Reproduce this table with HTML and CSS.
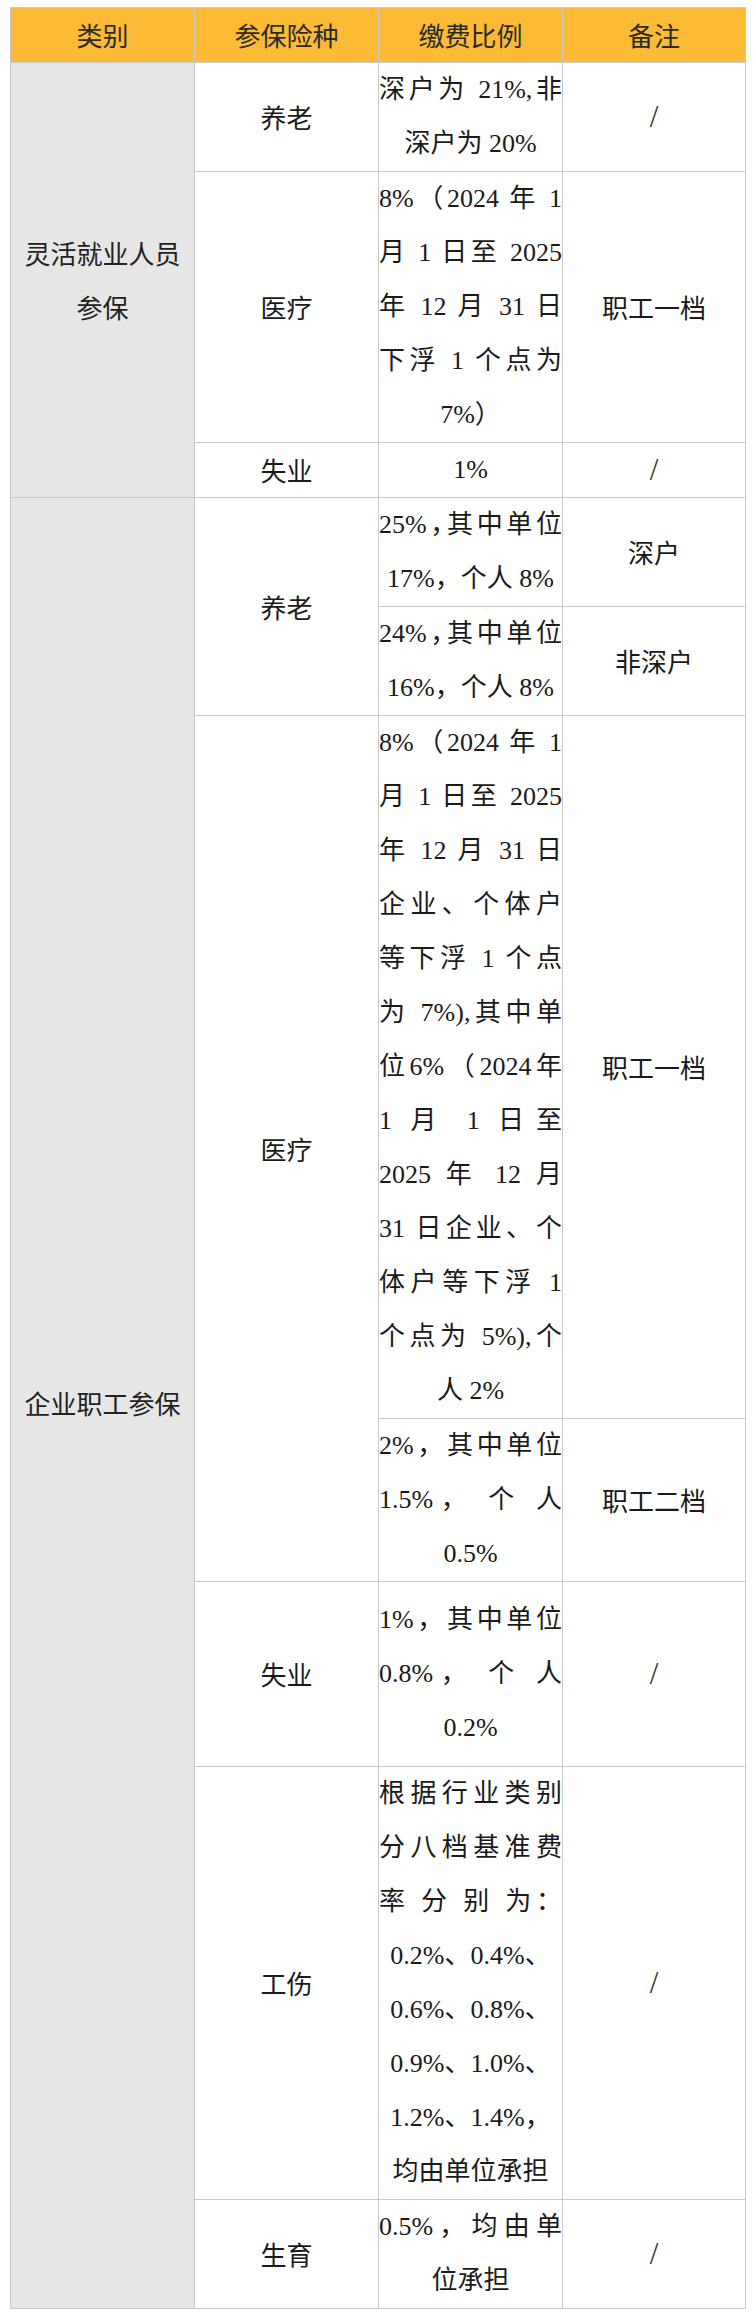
FILE: index.html
```html
<!DOCTYPE html>
<html lang="zh-CN">
<head>
<meta charset="utf-8">
<title>社保缴费比例</title>
<link rel="stylesheet" href="styles.css">
</head>
<body>
<table class="sheet">
  <colgroup>
    <col class="col-a"><col class="col-b"><col class="col-c"><col class="col-d">
  </colgroup>
  <thead>
    <tr><th>类别</th><th>参保险种</th><th>缴费比例</th><th>备注</th></tr>
  </thead>
  <tbody>
    <tr>
      <td class="cat" rowspan="3">灵活就业人员<br>参保</td>
      <td class="ins">养老</td>
      <td class="rate"><span class="l j">深户为 21%,非</span><span class="l">深户为 20%</span></td>
      <td class="note slash">/</td>
    </tr>
    <tr>
      <td class="ins">医疗</td>
      <td class="rate">
        <span class="l j">8%（2024 年 1</span>
        <span class="l j">月 1 日至 2025</span>
        <span class="l j">年 12 月 31 日</span>
        <span class="l j">下浮 1 个点为</span>
        <span class="l">7%）</span>
      </td>
      <td class="note">职工一档</td>
    </tr>
    <tr>
      <td class="ins">失业</td>
      <td class="rate c"><span class="l">1%</span></td>
      <td class="note slash">/</td>
    </tr>
    <tr>
      <td class="cat" rowspan="7">企业职工参保</td>
      <td class="ins" rowspan="2">养老</td>
      <td class="rate"><span class="l j halt">25%，其中单位</span><span class="l">17%，个人 8%</span></td>
      <td class="note">深户</td>
    </tr>
    <tr>
      <td class="rate"><span class="l j halt">24%，其中单位</span><span class="l">16%，个人 8%</span></td>
      <td class="note">非深户</td>
    </tr>
    <tr>
      <td class="ins" rowspan="2">医疗</td>
      <td class="rate">
        <span class="l j">8%（2024 年 1</span>
        <span class="l j">月 1 日至 2025</span>
        <span class="l j">年 12 月 31 日</span>
        <span class="l j">企业、个体户</span>
        <span class="l j">等下浮 1 个点</span>
        <span class="l j">为 7%),其中单</span>
        <span class="l j">位6%（2024年</span>
        <span class="l j">1 月 1 日至</span>
        <span class="l j">2025 年 12 月</span>
        <span class="l j">31 日企业、个</span>
        <span class="l j">体户等下浮 1</span>
        <span class="l j">个点为 5%),个</span>
        <span class="l">人 2%</span>
      </td>
      <td class="note">职工一档</td>
    </tr>
    <tr>
      <td class="rate">
        <span class="l j">2%，其中单位</span>
        <span class="l j">1.5%， 个 人</span>
        <span class="l">0.5%</span>
      </td>
      <td class="note">职工二档</td>
    </tr>
    <tr class="tall">
      <td class="ins">失业</td>
      <td class="rate">
        <span class="l j">1%，其中单位</span>
        <span class="l j">0.8%， 个 人</span>
        <span class="l">0.2%</span>
      </td>
      <td class="note slash">/</td>
    </tr>
    <tr>
      <td class="ins">工伤</td>
      <td class="rate">
        <span class="l j">根据行业类别</span>
        <span class="l j">分八档基准费</span>
        <span class="l j">率 分 别 为：</span>
        <span class="l">0.2%、0.4%、</span>
        <span class="l">0.6%、0.8%、</span>
        <span class="l">0.9%、1.0%、</span>
        <span class="l">1.2%、1.4%，</span>
        <span class="l">均由单位承担</span>
      </td>
      <td class="note slash">/</td>
    </tr>
    <tr>
      <td class="ins">生育</td>
      <td class="rate"><span class="l j">0.5%，均由单</span><span class="l">位承担</span></td>
      <td class="note slash">/</td>
    </tr>
  </tbody>
</table>
</body>
</html>
```

FILE: styles.css
```css
html, body {
  margin: 0;
  background: #ffffff;
}

body {
  padding: 7px 10px;
  font-family: "Noto Sans CJK SC", sans-serif;
}

.sheet {
  border-collapse: collapse;
  table-layout: fixed;
  width: 735px;
  font-size: 26px;
  color: #1a1a1a;
}

.col-a, .col-b, .col-c { width: 184px; }
.col-d { width: 183px; }

.sheet th,
.sheet td {
  border: 1px solid #c9c9c9;
  padding: 0;
  line-height: 54px;
  vertical-align: middle;
  text-align: center;
  font-weight: 400;
}

.sheet th {
  background: #fcba35;
  color: #2b2b2b;
}

.cat {
  background: #e6e6e6;
  color: #222;
}

.ins, .note {
  font-weight: 300;
}

.rate {
  text-align: left;
  padding: 0 2px 0 13px;
  font-family: "Liberation Serif", "Noto Sans CJK SC", serif;
  font-weight: 300;
}

.rate.c {
  text-align: center;
  padding: 0;
}

.l {
  display: block;
  height: 54px;
  white-space: nowrap;
}

.j {
  text-align: justify;
  text-align-last: justify;
}

.halt {
  font-feature-settings: "halt";
}

.sheet td.slash {
  font-family: "Liberation Serif", serif;
  font-size: 31px;
  color: #333;
}

.tall {
  height: 185px;
}
```
